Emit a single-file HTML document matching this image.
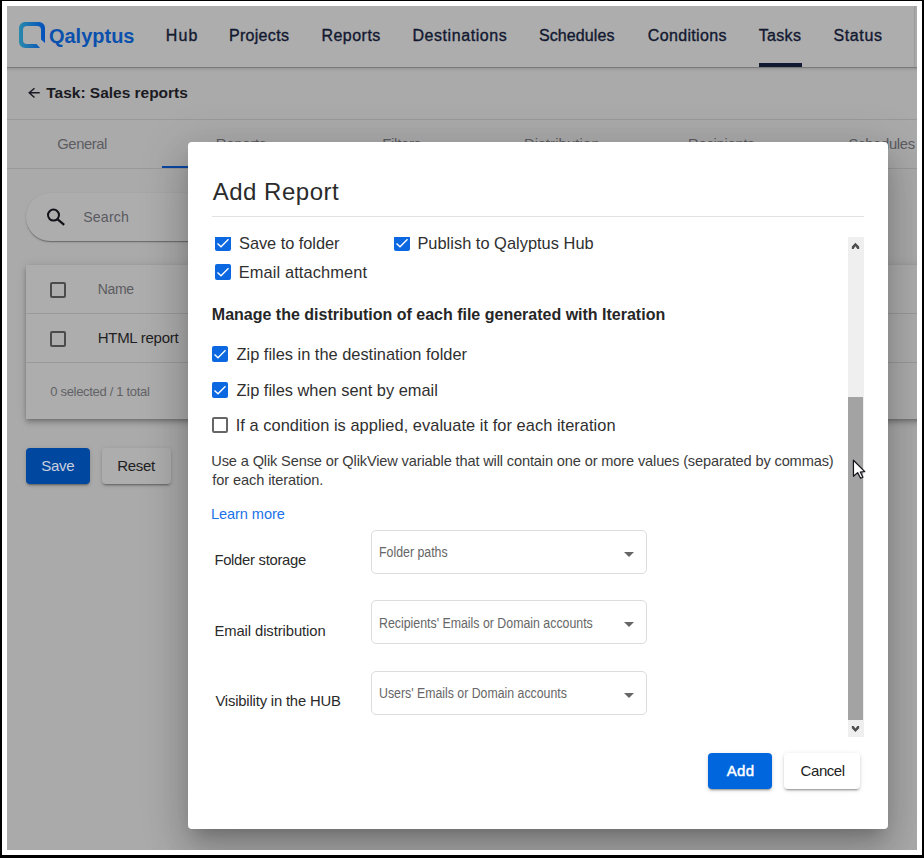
<!DOCTYPE html>
<html><head><meta charset="utf-8">
<style>
*{box-sizing:border-box;margin:0;padding:0}
html,body{width:924px;height:858px;overflow:hidden;background:#000;font-family:"Liberation Sans",sans-serif}
.abs{position:absolute}
#frame{position:absolute;left:2px;top:1px;width:920px;height:854px;background:#fff}
#app{position:absolute;left:7px;top:6px;width:910px;height:844px;overflow:hidden;background:#aaaaaa}
#pg{position:absolute;left:-7px;top:-6px;width:924px;height:858px}
.t{position:absolute;white-space:nowrap;line-height:1}
#hdr{position:absolute;left:0;top:0;width:924px;height:68px;background:#adadad;border-bottom:1px solid #7a7a7a;box-shadow:0 1px 3px rgba(0,0,0,0.15)}
#sub{position:absolute;left:0;top:68px;width:924px;height:52px;border-bottom:1px solid #999}
#tabs{position:absolute;left:0;top:120px;width:924px;height:49px;border-bottom:1px solid #999}
.cb{position:absolute;width:16px;height:16px;border:2px solid #4b4b4b;border-radius:2px}
.bcb{position:absolute;width:16px;height:16px;background:#0b68e0;border-radius:2px}
.bcb svg{position:absolute;left:0;top:0}
.wcb{position:absolute;width:16px;height:16px;border:2px solid #666;border-radius:2px}
#modal{position:absolute;left:188px;top:142px;width:700px;height:687px;background:#fff;border-radius:4px;
 box-shadow:0px 11px 15px -7px rgba(0,0,0,0.2),0px 24px 38px 3px rgba(0,0,0,0.14),0px 9px 46px 8px rgba(0,0,0,0.12)}
.sel{position:absolute;left:371px;width:276px;height:44px;border:1px solid #dcdcdc;border-radius:5px;background:#fff}
.sel .tri{position:absolute;left:252px;top:21px;width:0;height:0;border-left:5px solid transparent;border-right:5px solid transparent;border-top:5px solid #666}
</style></head><body>
<div id="frame"></div>
<div id="app"><div id="pg">
  <div id="hdr"></div>
  <div class="abs" style="left:914px;top:6px;width:1px;height:61px;background:#9c9c9c"></div><div class="abs" style="left:915px;top:6px;width:2px;height:61px;background:#a9a9a9"></div>
  <svg class="abs" style="left:19px;top:22px" width="26" height="26" viewBox="0 0 26 26">
    <defs><linearGradient id="lg" x1="0" y1="0" x2="1" y2="0"><stop offset="0" stop-color="#2a89ab"/><stop offset="1" stop-color="#034fbd"/></linearGradient></defs>
    <path d="M6 0 H20 A6 6 0 0 1 26 6 V21 L22 17.5 V8 A4 4 0 0 0 18 4 H8 A4 4 0 0 0 4 8 V18 A4 4 0 0 0 8 22 H17.5 L21 26 H6 A6 6 0 0 1 0 20 V6 A6 6 0 0 1 6 0 Z" fill="url(#lg)"/>
  </svg>
  <div class="t" style="left:48.90px;top:26.00px;font-size:20px;color:#0a50ad;font-weight:bold;">Qalyptus</div>
  <div class="t" style="left:165.70px;top:28.00px;font-size:16px;color:#121830;-webkit-text-stroke:0.35px #121830;letter-spacing:1.150px;">Hub</div> <div class="t" style="left:228.90px;top:28.00px;font-size:16px;color:#121830;-webkit-text-stroke:0.35px #121830;letter-spacing:0.314px;">Projects</div> <div class="t" style="left:321.40px;top:28.00px;font-size:16px;color:#121830;-webkit-text-stroke:0.35px #121830;letter-spacing:0.483px;">Reports</div> <div class="t" style="left:412.50px;top:28.00px;font-size:16px;color:#121830;-webkit-text-stroke:0.35px #121830;letter-spacing:0.555px;">Destinations</div> <div class="t" style="left:539.00px;top:28.00px;font-size:16px;color:#121830;-webkit-text-stroke:0.35px #121830;letter-spacing:0.100px;">Schedules</div> <div class="t" style="left:647.80px;top:28.00px;font-size:16px;color:#121830;-webkit-text-stroke:0.35px #121830;letter-spacing:0.333px;">Conditions</div> <div class="t" style="left:758.80px;top:28.00px;font-size:16px;color:#121830;-webkit-text-stroke:0.35px #121830;letter-spacing:0.300px;">Tasks</div> <div class="t" style="left:833.40px;top:28.00px;font-size:16px;color:#121830;-webkit-text-stroke:0.35px #121830;letter-spacing:0.640px;">Status</div>
  <div class="abs" style="left:759px;top:63px;width:43px;height:4px;background:#121a33"></div>

  <div id="sub"></div>
  <svg class="abs" style="left:27px;top:86px" width="14" height="14" viewBox="0 0 14 14"><path d="M12.7 6.8 H2.3 M7.5 2.2 L2.2 6.8 L7.5 11.5" stroke="#1a1a24" stroke-width="1.45" fill="none"/></svg>
  <div class="t" style="left:46.30px;top:85.00px;font-size:15.5px;color:#1a1a22;font-weight:bold;letter-spacing:-0.017px;">Task: Sales reports</div>

  <div id="tabs"></div>
  <div class="t" style="left:57.30px;top:137.00px;font-size:14.8px;color:#5c5c62;letter-spacing:-0.433px;">General</div> <div class="t" style="left:215.80px;top:137.00px;font-size:14.8px;color:#5c5c62;letter-spacing:-0.200px;">Reports</div> <div class="t" style="left:382.30px;top:137.00px;font-size:14.8px;color:#5c5c62;letter-spacing:-0.250px;">Filters</div> <div class="t" style="left:524.00px;top:137.00px;font-size:14.8px;color:#5c5c62;letter-spacing:0.145px;">Distribution</div> <div class="t" style="left:688.00px;top:137.00px;font-size:14.8px;color:#5c5c62;letter-spacing:-0.267px;">Recipients</div> <div class="t" style="left:848.50px;top:137.00px;font-size:14.8px;color:#5c5c62;letter-spacing:-0.312px;">Schedules</div>
  <div class="abs" style="left:162px;top:166px;width:160px;height:2px;background:#0a47a3"></div>

  <div class="abs" style="left:26px;top:193px;width:660px;height:48px;border-radius:24px;background:#adadad;box-shadow:0px 2px 1px -1px rgba(0,0,0,0.2),0px 1px 1px 0px rgba(0,0,0,0.14),0px 1px 3px 0px rgba(0,0,0,0.12)"></div>
  <svg class="abs" style="left:45px;top:207px" width="20" height="20" viewBox="0 0 20 20"><circle cx="8.5" cy="8.1" r="5.5" stroke="#111118" stroke-width="2" fill="none"/><path d="M12.4 12.1 L19.2 17.9" stroke="#111118" stroke-width="2.2"/></svg>
  <div class="t" style="left:83.20px;top:210.00px;font-size:14.2px;color:#5a5a62;letter-spacing:0.160px;">Search</div>

  <div class="abs" style="left:26px;top:265px;width:900px;height:154px;background:#adadad;box-shadow:0 2px 4px -1px rgba(0,0,0,.2),0 4px 5px 0 rgba(0,0,0,.14),0 1px 10px 0 rgba(0,0,0,.12)"></div>
  <div class="abs" style="left:26px;top:313px;width:900px;height:1px;background:#9a9a9a"></div>
  <div class="abs" style="left:26px;top:362px;width:900px;height:1px;background:#9a9a9a"></div>
  <div class="cb" style="left:50px;top:282px"></div>
  <div class="cb" style="left:50px;top:331px"></div>
  <div class="t" style="left:97.70px;top:282.00px;font-size:14px;color:#5c5c60;letter-spacing:-0.300px;">Name</div> <div class="t" style="left:97.70px;top:330.00px;font-size:15px;color:#1f1f24;letter-spacing:-0.270px;">HTML report</div> <div class="t" style="left:50.30px;top:385.00px;font-size:13px;color:#626266;letter-spacing:-0.311px;">0 selected / 1 total</div>

  <div class="abs" style="left:26px;top:448px;width:64px;height:36px;border-radius:4px;background:#0047a0;box-shadow:0 3px 1px -2px rgba(0,0,0,.2),0 2px 2px 0 rgba(0,0,0,.14),0 1px 5px 0 rgba(0,0,0,.12)"></div>
  <div class="t" style="left:41.30px;top:458.00px;font-size:15px;color:#c9d1de;letter-spacing:-0.300px;">Save</div>
  <div class="abs" style="left:102px;top:448px;width:69px;height:36px;border-radius:4px;background:#adadad;box-shadow:0 3px 1px -2px rgba(0,0,0,.2),0 2px 2px 0 rgba(0,0,0,.14),0 1px 5px 0 rgba(0,0,0,.12)"></div>
  <div class="t" style="left:117.30px;top:458.00px;font-size:15px;color:#1d1d22;letter-spacing:-0.350px;">Reset</div>

  <div id="modal"></div>
  <div class="t" style="left:212.70px;top:180.00px;font-size:24px;color:#2b2b2b;letter-spacing:0.511px;">Add Report</div>
  <div class="abs" style="left:212px;top:216px;width:652px;height:1px;background:#e2e2e2"></div>

  <div class="abs" style="left:188px;top:237px;width:700px;height:500px;overflow:hidden">
   <div class="abs" style="left:-188px;top:-237px;width:924px;height:858px">
    <div class="bcb" style="left:215px;top:235px"><svg width="16" height="16" viewBox="0 0 16 16"><path d="M2.5 8.5 L6 11.8 L13.5 4.3" stroke="#fff" stroke-width="1.4" fill="none"/></svg></div>
    <div class="t" style="left:239.00px;top:235.00px;font-size:16.4px;color:#2f2f2f;letter-spacing:-0.046px;">Save to folder</div>
    <div class="bcb" style="left:394px;top:235px"><svg width="16" height="16" viewBox="0 0 16 16"><path d="M2.5 8.5 L6 11.8 L13.5 4.3" stroke="#fff" stroke-width="1.4" fill="none"/></svg></div>
    <div class="t" style="left:417.40px;top:235.00px;font-size:16.4px;color:#2f2f2f;letter-spacing:0.018px;">Publish to Qalyptus Hub</div>
    <div class="bcb" style="left:215px;top:264px"><svg width="16" height="16" viewBox="0 0 16 16"><path d="M2.5 8.5 L6 11.8 L13.5 4.3" stroke="#fff" stroke-width="1.4" fill="none"/></svg></div>
    <div class="t" style="left:238.70px;top:264.00px;font-size:16.4px;color:#2f2f2f;letter-spacing:0.120px;">Email attachment</div>
    <div class="t" style="left:211.80px;top:307.00px;font-size:16px;color:#262626;font-weight:bold;">Manage the distribution of each file generated with Iteration</div>
    <div class="bcb" style="left:212px;top:346px"><svg width="16" height="16" viewBox="0 0 16 16"><path d="M2.5 8.5 L6 11.8 L13.5 4.3" stroke="#fff" stroke-width="1.4" fill="none"/></svg></div>
    <div class="t" style="left:236.50px;top:346.00px;font-size:16.4px;color:#2f2f2f;">Zip files in the destination folder</div>
    <div class="bcb" style="left:212px;top:382px"><svg width="16" height="16" viewBox="0 0 16 16"><path d="M2.5 8.5 L6 11.8 L13.5 4.3" stroke="#fff" stroke-width="1.4" fill="none"/></svg></div>
    <div class="t" style="left:236.50px;top:382.00px;font-size:16.4px;color:#2f2f2f;">Zip files when sent by email</div>
    <div class="wcb" style="left:212px;top:417px"></div>
    <div class="t" style="left:235.70px;top:417.00px;font-size:16.4px;color:#2f2f2f;letter-spacing:0.048px;">If a condition is applied, evaluate it for each iteration</div>
    <div class="t" style="left:211.30px;top:454.00px;font-size:14.6px;color:#3a3a3a;letter-spacing:-0.140px;">Use a Qlik Sense or QlikView variable that will contain one or more values (separated by commas)</div> <div class="t" style="left:212.30px;top:473.00px;font-size:14.6px;color:#3a3a3a;letter-spacing:-0.100px;">for each iteration.</div> <div class="t" style="left:211.00px;top:507.00px;font-size:14.6px;color:#1a73e8;letter-spacing:-0.089px;">Learn more</div>
    <div class="t" style="left:214.40px;top:553.00px;font-size:14.8px;color:#2a2a2a;letter-spacing:-0.277px;">Folder storage</div>
    <div class="sel" style="top:530px"><div class="tri"></div></div>
    <div class="t" style="left:379.42px;top:545.00px;font-size:14px;color:#666;transform:scaleX(0.8818);transform-origin:0 0;">Folder paths</div>
    <div class="t" style="left:214.40px;top:624.00px;font-size:14.8px;color:#2a2a2a;letter-spacing:-0.082px;">Email distribution</div>
    <div class="sel" style="top:600px"><div class="tri"></div></div>
    <div class="t" style="left:379.42px;top:616.00px;font-size:14px;color:#666;transform:scaleX(0.8822);transform-origin:0 0;">Recipients' Emails or Domain accounts</div>
    <div class="t" style="left:215.40px;top:694.00px;font-size:14.8px;color:#2a2a2a;letter-spacing:-0.170px;">Visibility in the HUB</div>
    <div class="sel" style="top:671px"><div class="tri"></div></div>
    <div class="t" style="left:379.42px;top:686.00px;font-size:14px;color:#666;transform:scaleX(0.8797);transform-origin:0 0;">Users' Emails or Domain accounts</div>
   </div>
  </div>

  <div class="abs" style="left:848px;top:237px;width:16px;height:500px;background:#efefef"></div>
  <div class="abs" style="left:848px;top:397px;width:15px;height:323px;background:#a3a3a3"></div>
  <svg class="abs" style="left:848px;top:237px" width="16" height="17" viewBox="0 0 16 17"><path d="M3.85 11.9 L3.85 9.6 L7.4 5.8 L11.15 9.6 L11.15 11.9 L9.4 11.9 L7.4 9.3 L5.6 11.9 Z" fill="#4f4f4f"/></svg>
  <svg class="abs" style="left:848px;top:720px" width="16" height="17" viewBox="0 0 16 17"><path d="M3.85 5.9 L3.85 8.2 L7.4 11.95 L11.15 8.2 L11.15 5.9 L9.4 5.9 L7.4 8.5 L5.6 5.9 Z" fill="#4f4f4f"/></svg>

  <div class="abs" style="left:708px;top:753px;width:64px;height:36px;border-radius:4px;background:#0066dd;box-shadow:0 3px 1px -2px rgba(0,0,0,.2),0 2px 2px 0 rgba(0,0,0,.14),0 1px 5px 0 rgba(0,0,0,.12)"></div>
  <div class="t" style="left:726.70px;top:763.00px;font-size:15px;color:#ffffff;-webkit-text-stroke:0.45px #fff;letter-spacing:0.350px;">Add</div>
  <div class="abs" style="left:784px;top:753px;width:76px;height:36px;border-radius:4px;background:#fff;box-shadow:0 3px 1px -2px rgba(0,0,0,.2),0 2px 2px 0 rgba(0,0,0,.14),0 1px 5px 0 rgba(0,0,0,.12)"></div>
  <div class="t" style="left:800.60px;top:763.00px;font-size:15px;color:#222222;letter-spacing:-0.440px;">Cancel</div>

  <svg class="abs" style="left:852px;top:459px" width="14" height="22" viewBox="0 0 14 22"><path d="M1.4 1.2 L1.5 17.3 L5.6 13.6 L8.6 19.3 L10.9 18.2 L8.3 13 L12.8 12.6 Z" fill="#fff" stroke="#15151c" stroke-width="1.25" stroke-linejoin="round"/></svg>
</div></div>
</body></html>
